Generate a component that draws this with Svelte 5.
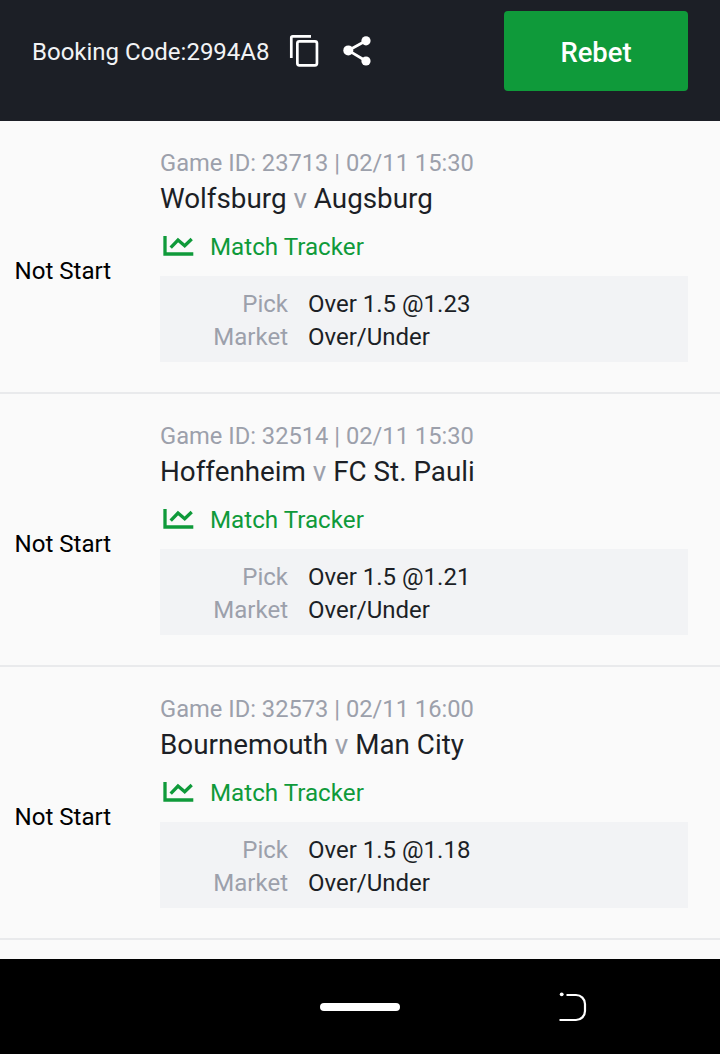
<script>
  const games = [
    { id: '23713', time: '02/11 15:30', home: 'Wolfsburg', away: 'Augsburg', odds: '1.23' },
    { id: '32514', time: '02/11 15:30', home: 'Hoffenheim', away: 'FC St. Pauli', odds: '1.21' },
    { id: '32573', time: '02/11 16:00', home: 'Bournemouth', away: 'Man City', odds: '1.18' }
  ];
</script>

<div class="screen">
  <header class="top">
    <div class="code">
      <span class="code-text">Booking Code:2994A8</span>
      <svg class="copy" width="32" height="36" viewBox="0 0 32 36" fill="none" stroke="#fff" stroke-width="2.700">
        <path d="M2.300 25V4.800A1.500 1.500 0 0 1 3.800 3.300H22" />
        <rect x="8.350" y="8.350" width="19.600" height="24" rx="2" />
      </svg>
      <svg class="share" width="32" height="34" viewBox="0 0 32 34" fill="#fff" stroke="none">
        <circle cx="25" cy="6.800" r="4.600" />
        <circle cx="7.300" cy="16.400" r="5" />
        <circle cx="25" cy="27" r="4.600" />
        <path d="M7.300 16.400L25 6.800M7.300 16.400L25 27" stroke="#fff" stroke-width="2.800" />
      </svg>
    </div>
    <button class="rebet">Rebet</button>
  </header>

  <main class="list">
    {#each games as g}
      <section class="row">
        <div class="status">Not Start</div>
        <div class="info">
          <div class="meta">Game ID: {g.id} | {g.time}</div>
          <div class="teams">{g.home} <span class="v">v</span> {g.away}</div>
          <div class="tracker">
            <svg width="32" height="24" viewBox="0 0 32 24" fill="none" stroke="#0f9a3a" stroke-width="3.300">
              <path d="M3 1V19H31.300" />
              <path d="M8.700 12.700L16 5L22.700 10.700L29.700 4" />
            </svg>
            <span>Match Tracker</span>
          </div>
          <div class="detail">
            <span class="label">Pick</span><span class="value">Over 1.5 @{g.odds}</span>
            <span class="label">Market</span><span class="value">Over/Under</span>
          </div>
        </div>
      </section>
    {/each}
  </main>

  <footer class="nav">
    <div class="pill"></div>
    <svg class="back" width="30" height="32" viewBox="0 0 30 32" fill="none" stroke="#fff" stroke-width="2.200">
      <circle cx="3.700" cy="4.300" r="1.900" fill="#fff" stroke="none" />
      <path d="M8.500 5H18A9 9 0 0 1 27 14V21A9 9 0 0 1 18 30H1.500" />
    </svg>
  </footer>
</div>

<style>
  :global(body) {
    margin: 0;
    background: #fafafa;
  }
  .screen {
    height: 1054px;
    display: flex;
    flex-direction: column;
    font-family: Roboto, "Liberation Sans", sans-serif;
    background: #fafafa;
    overflow: hidden;
  }
  .top {
    height: 121px;
    box-sizing: border-box;
    background: #1c1f26;
    display: flex;
    align-items: flex-start;
    justify-content: space-between;
    padding: 11px 32px 0;
  }
  .code {
    display: flex;
    align-items: center;
    height: 80px;
    color: #f2f3f5;
  }
  .code-text {
    font-size: 24px;
    padding-top: 2px;
  }
  .copy {
    margin-left: 19px;
  }
  .share {
    margin-left: 20px;
  }
  .rebet {
    width: 184px;
    height: 80px;
    padding: 3px 0 0;
    border: none;
    border-radius: 4px;
    background: #0f9a3a;
    color: #fff;
    font-family: inherit;
    font-size: 27.4px;
    font-weight: 500;
  }
  .list {
    flex: 1;
  }
  .row {
    height: 273px;
    box-sizing: border-box;
    border-bottom: 2px solid #e9eaec;
    display: flex;
    align-items: flex-start;
  }
  .status {
    width: 160px;
    flex: none;
    box-sizing: border-box;
    padding: 135px 0 0 14.5px;
    font-size: 24.1px;
    line-height: 30px;
    color: #000;
  }
  .info {
    flex: 1;
    padding: 27px 32px 0 0;
  }
  .meta {
    font-size: 23.7px;
    line-height: 30px;
    color: #9ca0ab;
  }
  .teams {
    font-size: 27.8px;
    line-height: 36px;
    margin-top: 3px;
    color: #1c1f26;
  }
  .v {
    color: #9ca0ab;
  }
  .tracker {
    display: flex;
    align-items: center;
    margin-top: 14px;
    height: 32px;
    color: #0f9a3a;
    font-size: 24.2px;
  }
  .tracker svg {
    margin-right: 16px;
    margin-left: 2px;
  }
  .detail {
    margin-top: 13px;
    height: 86px;
    box-sizing: border-box;
    padding: 4px 0 0;
    background: #f2f3f5;
    display: grid;
    grid-template-columns: 128px 1fr;
    column-gap: 20px;
    font-size: 24px;
    line-height: 33px;
    align-content: center;
  }
  .label {
    text-align: right;
    color: #9ca0ab;
  }
  .value {
    color: #1c1f26;
  }
  .nav {
    height: 95px;
    flex: none;
    background: #000;
    position: relative;
    display: flex;
    justify-content: center;
  }
  .pill {
    width: 80px;
    height: 8px;
    margin-top: 44px;
    border-radius: 4px;
    background: #fff;
  }
  .back {
    position: absolute;
    left: 558px;
    top: 31px;
  }
</style>
